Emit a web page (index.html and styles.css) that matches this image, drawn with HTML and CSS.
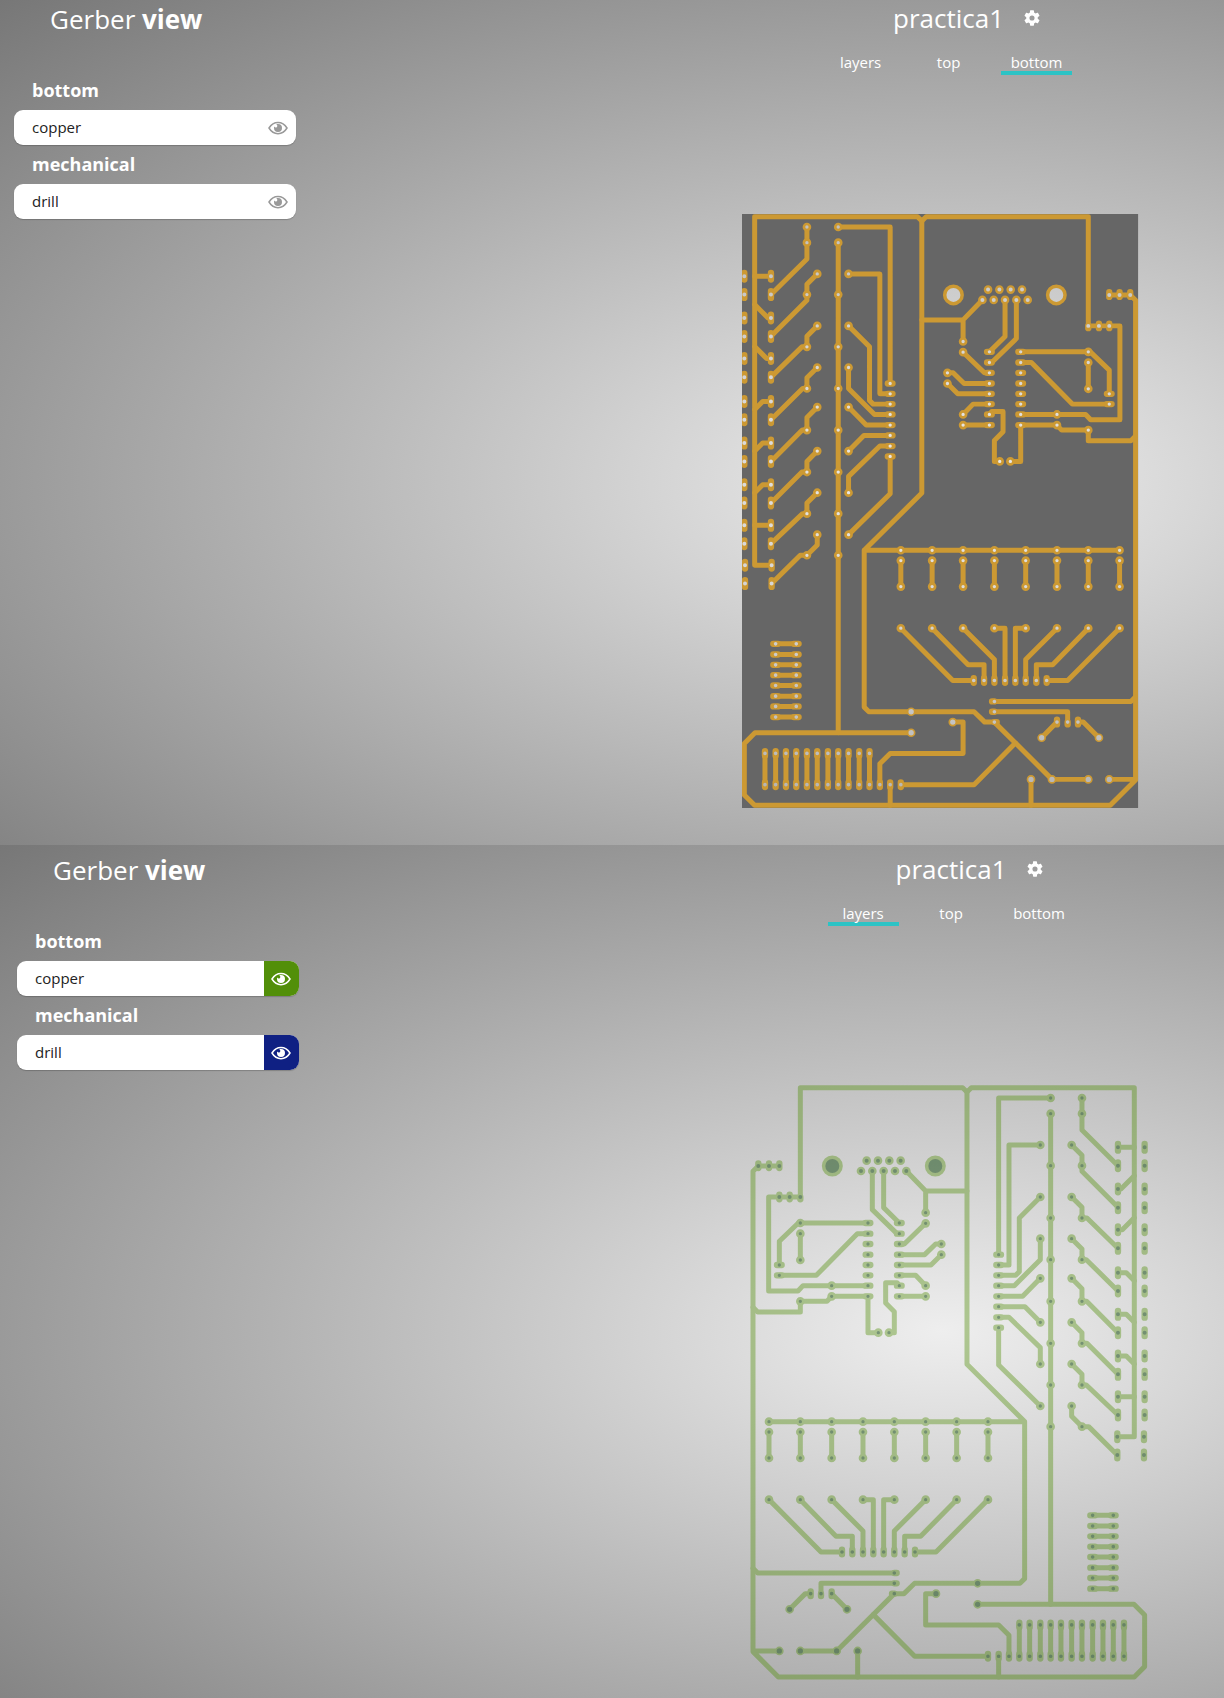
FILE: index.html
```html
<!DOCTYPE html>
<html lang="en">
<head>
<meta charset="utf-8">
<meta name="viewport" content="width=device-width, initial-scale=1">
<title>Gerber view</title>
<link rel="stylesheet" href="styles.css">
</head>
<body>

<svg class="defs" aria-hidden="true">
  <defs>
    <symbol id="eye" viewBox="0 0 20 14">
      <path d="M1 7C5.500-.5 14.500-.5 19 7C14.500 14.500 5.500 14.500 1 7Z" fill="none" stroke="currentColor" stroke-width="1.500"/>
      <path d="M10 3a4 4 0 1 1-4 4c0-.5.100-1 .3-1.400a1.600 1.600 0 1 0 2-2.200C8.800 3.100 9.400 3 10 3Z" fill="currentColor"/>
    </symbol>
    <symbol id="gear" viewBox="2 2 20 20">
      <path fill="currentColor" d="M19.140 12.940c.04-.3.060-.61.060-.94s-.02-.64-.07-.94l2.030-1.580a.49.49 0 0 0 .12-.61l-1.920-3.320a.488.488 0 0 0-.59-.22l-2.390.96c-.5-.38-1.030-.7-1.620-.94l-.36-2.540a.484.484 0 0 0-.48-.41h-3.840c-.24 0-.43.17-.47.41l-.36 2.540c-.59.24-1.130.57-1.620.94l-2.390-.96c-.22-.08-.47 0-.59.22L2.740 8.870c-.12.210-.08.470.12.610l2.030 1.580c-.05.300-.09.630-.09.940s.02.640.07.940l-2.030 1.580a.49.49 0 0 0-.12.610l1.920 3.320c.12.220.37.290.59.220l2.390-.96c.5.380 1.030.700 1.620.940l.36 2.540c.05.240.24.410.48.410h3.840c.24 0 .44-.17.470-.41l.36-2.540c.59-.24 1.130-.56 1.620-.94l2.390.96c.22.080.47 0 .59-.22l1.920-3.320c.12-.22.070-.47-.12-.61l-2.010-1.580zM12 15.200a3.200 3.200 0 1 1 0-6.400a3.200 3.200 0 0 1 0 6.400z"/>
    </symbol>

    <g id="copper" fill="none" stroke-linecap="round" stroke-linejoin="round">
      <!-- tracks -->
      <g stroke-width="15">
        <path d="M89 1055H38V8H527L540 21L553 8H1040V336"/>
        <path d="M540 21V838L367 1010V1481L381 1495H697L729 1526H758L931 1698H1040M367 1010H1134"/>
        <path d="M540 318H664L722 258M664 318V383M289 86V1558"/>
        <path d="M508 1558H39L7 1590V1745L38 1776H1106L1182 1700V259L1166 243H1103M1103 1698H1182"/>
        <path d="M1040 336H1135V618H1047L1032 602H837M837 634H946L960 649H1040V681H1168L1182 667M837 634V743H806"/>
        <path d="M774 743H758V680L784 654V593H750L743 602"/>
        <path d="M664 415L728 477H743M617 477H634L667 509H743M617 509L648 540H743M743 571H694L664 602M664 634H743"/>
        <path d="M743 414L790 368V258M743 446H750L824 374V258M837 414H1046L1103 469V540M837 446H869L992 571H1103M1040 446V525"/>
        <path d="M38 187H87M38 272L78 312H87M38 398L74 434H87M38 587L62 563H87M38 712L62 688H87M38 837L62 813H87M38 935H87"/>
        <path d="M195 39V135L87 242M226 180L195 211V259L87 367M226 336L195 367V399H180L87 490M226 461L195 492V524H182L87 618"/>
        <path d="M226 580L195 611V649H181L87 743M226 712L195 743V775H180L87 868M226 837L195 868V900H182L87 990M226 963V994L195 1025H175L89 1110"/>
        <path d="M289 39H445V509M320 180H414V540H445M320 336L383 399V560L394 571H445M320 461V524L398 602H445"/>
        <path d="M320 580L373 634H445M320 712L366 665H445M320 837V788L414 697H445M445 728V840L320 963"/>
        <path d="M477 1041V1119M571 1041V1119M664 1041V1119M758 1041V1119M852 1041V1119M946 1041V1119M1040 1041V1119M1134 1041V1119"/>
        <path d="M477 1244L633 1401H696M571 1244L679 1354H727V1401M664 1244L758 1338V1401M758 1244H790V1401"/>
        <path d="M852 1244H821V1401M946 1244L852 1338V1401M1040 1244L933 1354H884V1401M1134 1244L978 1401H915"/>
        <path d="M758 1464H1168L1182 1450M758 1495H978V1526M900 1573L946 1526M1072 1573L1025 1526H1009"/>
        <path d="M868 1698V1776M821 1589L697 1714H477M445 1714V1776M414 1714V1651L445 1620H664V1526H633"/>
        <path d="M69 1620V1714M101 1620V1714M132 1620V1714M163 1620V1714M195 1620V1714M226 1620V1714M258 1620V1714M289 1620V1714M320 1620V1714M352 1620V1714M383 1620V1714"/>
        <path d="M101 1291H163M101 1323H163M101 1354H163M101 1385H163M101 1416H163M101 1448H163M101 1479H163M101 1511H163"/>
      </g>
      <!-- oblong pads -->
      <g stroke-width="19">
        <path d="M7 177v20M7 232v20M7 302v20M7 358v20M7 424v20M7 480v20M7 553v20M7 608v20M7 678v20M7 733v20M7 803v20M7 858v20M7 925v20M7 980v20M9 1045v20M9 1100v20"/>
        <path d="M87 177v20M87 232v20M87 302v20M87 358v20M87 424v20M87 480v20M87 553v20M87 608v20M87 678v20M87 733v20M87 803v20M87 858v20M87 925v20M87 980v20M89 1045v20M89 1100v20"/>
        <path d="M438 509h14M438 540h14M438 571h14M438 602h14M438 634h14M438 665h14M438 697h14M438 728h14"/>
        <path d="M736 414h14M736 446h14M736 477h14M736 509h14M736 540h14M736 571h14M736 602h14M736 634h14"/>
        <path d="M830 414h14M830 446h14M830 477h14M830 509h14M830 540h14M830 571h14M830 602h14M830 634h14M1096 540h14M1096 571h14"/>
        <path d="M1103 235v14M1134 235v14M1166 235v14M1040 336v7M1072 329v14M1103 329v14"/>
        <path d="M696 1394v14M727 1394v14M758 1394v14M790 1394v14M821 1394v14M852 1394v14M884 1394v14M915 1394v14"/>
        <path d="M751 1464h7M751 1495h7M758 1526h7M946 1519v14M978 1526v7M1009 1519v14"/>
        <path d="M69 1613v14M101 1613v14M132 1613v14M163 1613v14M195 1613v14M226 1613v14M258 1613v14M289 1613v14M320 1613v14M352 1613v14M383 1613v14"/>
        <path d="M69 1707v14M101 1707v14M132 1707v14M163 1707v14M195 1707v14M226 1707v14M258 1707v14M289 1707v14M320 1707v14M352 1707v14M383 1707v14M414 1707v14M445 1707v14M477 1707v14"/>
        <path d="M94 1291h14M94 1323h14M94 1354h14M94 1385h14M94 1416h14M94 1448h14M94 1479h14M94 1511h14M156 1291h14M156 1323h14M156 1354h14M156 1385h14M156 1416h14M156 1448h14M156 1479h14M156 1511h14"/>
      </g>
      <!-- round pads -->
      <g stroke-width="26">
        <path d="M195 39h0M195 86h0M195 242h0M195 399h0M195 524h0M195 649h0M195 775h0M195 900h0M195 1025h0"/>
        <path d="M226 180h0M226 336h0M226 461h0M226 580h0M226 712h0M226 837h0M226 963h0"/>
        <path d="M289 39h0M289 86h0M289 242h0M289 399h0M289 524h0M289 649h0M289 775h0M289 900h0M289 1025h0"/>
        <path d="M320 180h0M320 336h0M320 461h0M320 580h0M320 712h0M320 837h0M320 963h0"/>
        <path d="M739 227h0M773 227h0M807 227h0M841 227h0M722 258h0M756 258h0M790 258h0M824 258h0M858 258h0"/>
        <path d="M664 383h0M664 415h0M617 477h0M617 509h0M664 602h0M664 634h0M946 602h0M946 634h0M1040 414h0M1040 446h0M1040 525h0M1040 649h0M774 743h0M806 743h0"/>
        <path d="M477 1010h0M571 1010h0M664 1010h0M758 1010h0M852 1010h0M946 1010h0M1040 1010h0M1134 1010h0"/>
        <path d="M477 1041h0M571 1041h0M664 1041h0M758 1041h0M852 1041h0M946 1041h0M1040 1041h0M1134 1041h0"/>
        <path d="M477 1119h0M571 1119h0M664 1119h0M758 1119h0M852 1119h0M946 1119h0M1040 1119h0M1134 1119h0"/>
        <path d="M477 1244h0M571 1244h0M664 1244h0M758 1244h0M852 1244h0M946 1244h0M1040 1244h0M1134 1244h0"/>
        <path d="M508 1495h0M508 1558h0M633 1526h0M900 1573h0M1072 1573h0M868 1698h0M931 1698h0M1040 1698h0M1103 1698h0"/>
      </g>
      <path stroke-width="63" d="M635 243h0M944 243h0"/>
    </g>

    <g id="drill" fill="none" stroke-linecap="round">
      <path stroke-width="12" d="M7 187h0M7 242h0M7 312h0M7 368h0M7 434h0M7 490h0M7 563h0M7 618h0M7 688h0M7 743h0M7 813h0M7 868h0M7 935h0M7 990h0M9 1055h0M9 1110h0M87 187h0M87 242h0M87 312h0M87 368h0M87 434h0M87 490h0M87 563h0M87 618h0M87 688h0M87 743h0M87 813h0M87 868h0M87 935h0M87 990h0M89 1055h0M89 1110h0M739 227h0M773 227h0M807 227h0M841 227h0M722 258h0M756 258h0M790 258h0M824 258h0M858 258h0M1103 243h0M1134 243h0M1166 243h0M1040 336h0M1072 336h0M1103 336h0"/>
      <path stroke-width="10" d="M195 39h0M195 86h0M195 242h0M195 399h0M195 524h0M195 649h0M195 775h0M195 900h0M195 1025h0M226 180h0M226 336h0M226 461h0M226 580h0M226 712h0M226 837h0M226 963h0M289 39h0M289 86h0M289 242h0M289 399h0M289 524h0M289 649h0M289 775h0M289 900h0M289 1025h0M320 180h0M320 336h0M320 461h0M320 580h0M320 712h0M320 837h0M320 963h0"/>
      <path stroke-width="10" d="M445 509h0M445 540h0M445 571h0M445 602h0M445 634h0M445 665h0M445 697h0M445 728h0M743 414h0M743 446h0M743 477h0M743 509h0M743 540h0M743 571h0M743 602h0M743 634h0M837 414h0M837 446h0M837 477h0M837 509h0M837 540h0M837 571h0M837 602h0M837 634h0M1103 540h0M1103 571h0"/>
      <path stroke-width="10" d="M664 383h0M664 415h0M617 477h0M617 509h0M664 602h0M664 634h0M946 602h0M946 634h0M1040 414h0M1040 446h0M1040 525h0M1040 649h0M774 743h0M806 743h0"/>
      <path stroke-width="10" d="M477 1010h0M571 1010h0M664 1010h0M758 1010h0M852 1010h0M946 1010h0M1040 1010h0M1134 1010h0M477 1041h0M571 1041h0M664 1041h0M758 1041h0M852 1041h0M946 1041h0M1040 1041h0M1134 1041h0M477 1119h0M571 1119h0M664 1119h0M758 1119h0M852 1119h0M946 1119h0M1040 1119h0M1134 1119h0M477 1244h0M571 1244h0M664 1244h0M758 1244h0M852 1244h0M946 1244h0M1040 1244h0M1134 1244h0"/>
      <path stroke-width="11" d="M696 1401h0M727 1401h0M758 1401h0M790 1401h0M821 1401h0M852 1401h0M884 1401h0M915 1401h0M758 1464h0M758 1495h0M758 1526h0M946 1526h0M978 1526h0M1009 1526h0"/>
      <path stroke-width="11" d="M69 1620h0M101 1620h0M132 1620h0M163 1620h0M195 1620h0M226 1620h0M258 1620h0M289 1620h0M320 1620h0M352 1620h0M383 1620h0M69 1714h0M101 1714h0M132 1714h0M163 1714h0M195 1714h0M226 1714h0M258 1714h0M289 1714h0M320 1714h0M352 1714h0M383 1714h0M414 1714h0M445 1714h0M477 1714h0"/>
      <path stroke-width="11" d="M101 1291h0M101 1323h0M101 1354h0M101 1385h0M101 1416h0M101 1448h0M101 1479h0M101 1511h0M163 1291h0M163 1323h0M163 1354h0M163 1385h0M163 1416h0M163 1448h0M163 1479h0M163 1511h0"/>
      <path stroke-width="16" d="M508 1495h0M508 1558h0M633 1526h0M900 1573h0M1072 1573h0M868 1698h0M931 1698h0M1040 1698h0M1103 1698h0"/>
      <path stroke-width="42" d="M635 243h0M944 243h0"/>
    </g>

    <mask id="drilled" maskUnits="userSpaceOnUse" x="0" y="0" width="1191" height="1785">
      <rect width="1191" height="1785" fill="#fff"/>
      <use href="#drill" stroke="#000"/>
    </mask>
  </defs>
</svg>

<section class="viewer viewer-render">
  <aside class="sidebar">
    <h1 class="brand">Gerber <b>view</b></h1>
    <h2 class="group">bottom</h2>
    <div class="layer">
      <span class="layer-name">copper</span>
      <button class="toggle" type="button" aria-label="Show copper"><svg class="eye"><use href="#eye"/></svg></button>
    </div>
    <h2 class="group">mechanical</h2>
    <div class="layer">
      <span class="layer-name">drill</span>
      <button class="toggle" type="button" aria-label="Show drill"><svg class="eye"><use href="#eye"/></svg></button>
    </div>
  </aside>
  <main class="stage">
    <header class="project">
      <h2 class="project-name">practica1</h2>
      <button class="settings" type="button" aria-label="Settings"><svg class="gear"><use href="#gear"/></svg></button>
    </header>
    <nav class="tabs">
      <a class="tab" href="#layers">layers</a>
      <a class="tab" href="#top">top</a>
      <a class="tab active" href="#bottom">bottom</a>
    </nav>
    <svg class="board" viewBox="0 0 1191 1785" role="img" aria-label="Bottom side of the board">
      <g mask="url(#drilled)">
        <rect class="substrate" width="1191" height="1785"/>
        <use class="finish" href="#copper"/>
      </g>
    </svg>
  </main>
</section>

<section class="viewer viewer-layers">
  <aside class="sidebar">
    <h1 class="brand">Gerber <b>view</b></h1>
    <h2 class="group">bottom</h2>
    <div class="layer">
      <span class="layer-name">copper</span>
      <button class="toggle toggle-copper" type="button" aria-label="Hide copper"><svg class="eye"><use href="#eye"/></svg></button>
    </div>
    <h2 class="group">mechanical</h2>
    <div class="layer">
      <span class="layer-name">drill</span>
      <button class="toggle toggle-drill" type="button" aria-label="Hide drill"><svg class="eye"><use href="#eye"/></svg></button>
    </div>
  </aside>
  <main class="stage">
    <header class="project">
      <h2 class="project-name">practica1</h2>
      <button class="settings" type="button" aria-label="Settings"><svg class="gear"><use href="#gear"/></svg></button>
    </header>
    <nav class="tabs">
      <a class="tab active" href="#layers">layers</a>
      <a class="tab" href="#top">top</a>
      <a class="tab" href="#bottom">bottom</a>
    </nav>
    <svg class="board" viewBox="0 0 1191 1785" role="img" aria-label="Copper and drill layers">
      <g transform="matrix(-1 0 0 1 1191 0)">
        <g class="drill-layer"><use href="#drill"/></g>
        <g class="copper-layer"><use href="#copper"/></g>
      </g>
    </svg>
  </main>
</section>

</body>
</html>
```
FILE: styles.css
```css
* {
  box-sizing: border-box;
}

body {
  margin: 0;
  font-family: "Open Sans", "Noto Sans", sans-serif;
  font-size: 16px;
  color: #fff;
}

h1,
h2 {
  margin: 0;
}

button {
  padding: 0;
  border: 0;
  background: none;
  color: inherit;
}

.defs {
  position: absolute;
  width: 0;
  height: 0;
}

.viewer {
  display: grid;
  grid-template-columns: 55% 45%;
  background: radial-gradient(ellipse farthest-corner at 77% 57%, #eee, #777);
}

.viewer-render {
  padding-bottom: 37px;
}

.viewer-layers {
  padding: 6px 0 18px;
}

.sidebar {
  width: 296px;
  padding: 1px 0 0 14px;
}

.viewer-layers .sidebar {
  width: 299px;
  padding-left: 17px;
}

.brand {
  padding-left: 36px;
  margin-bottom: 34px;
  font-size: 26px;
  font-weight: 400;
  line-height: 36px;
}

.group {
  padding-left: 18px;
  font-size: 18px;
  font-weight: 700;
  line-height: 39px;
}

.layer {
  display: flex;
  height: 35px;
  border-radius: 9px;
  overflow: hidden;
  background: #fff;
  color: #222;
  box-shadow: 0 1px 1px rgba(0, 0, 0, 0.2);
}

.layer-name {
  flex: 1;
  padding-left: 18px;
  font-size: 15px;
  line-height: 35px;
}

.toggle {
  display: grid;
  place-items: center;
  width: 35px;
  padding-right: 1px;
  color: #999;
}

.toggle-copper {
  background: #528f09;
  color: #fff;
}

.toggle-drill {
  background: #0f2083;
  color: #fff;
}

.eye {
  width: 20px;
  height: 14px;
}

.stage {
  display: flex;
  flex-direction: column;
  align-items: center;
}

.viewer-layers .stage {
  padding-left: 5px;
}

.project {
  display: grid;
  grid-template-columns: 1fr auto 1fr;
  align-items: center;
  gap: 20px;
  width: 100%;
  height: 36px;
}

.project-name {
  grid-column: 2;
  font-size: 26px;
  font-weight: 400;
  line-height: 36px;
}

.settings {
  justify-self: start;
}

.gear {
  display: block;
  width: 16px;
  height: 16px;
}

.tabs {
  display: flex;
  gap: 17px;
  margin-top: 15px;
}

.tab {
  width: 71px;
  height: 24px;
  border-bottom: 4px solid transparent;
  color: #fff;
  font-size: 15px;
  line-height: 22px;
  text-align: center;
  text-decoration: none;
}

.tab.active {
  border-bottom-color: #2cc3c5;
}

.board {
  display: block;
  width: 72%;
  overflow: visible;
}

.viewer-render .board {
  margin: 139px 16px 0 0;
}

.viewer-layers .board {
  width: calc(72% + 4px);
  margin: 159px 6px 0 0;
}

.substrate {
  fill: #666;
}

.finish {
  stroke: #c93;
}

.copper-layer {
  stroke: #528f09;
  opacity: 0.4;
}

.drill-layer {
  stroke: #0f2083;
  opacity: 0.4;
}
```
